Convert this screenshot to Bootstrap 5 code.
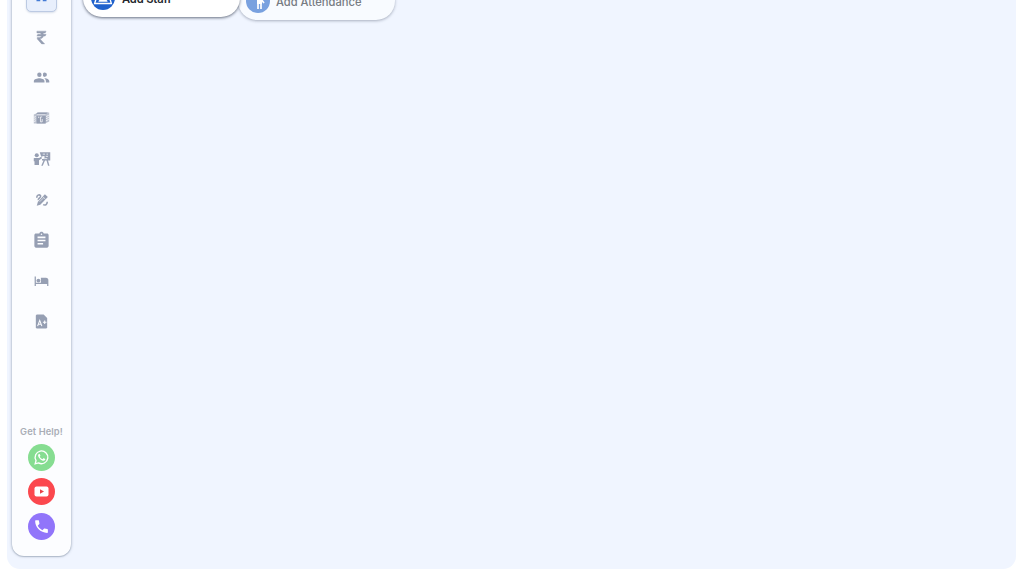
<!DOCTYPE html>
<html lang="en">
<head>
<meta charset="utf-8">
<meta name="viewport" content="width=device-width, initial-scale=1">
<title>Dashboard</title>
<link href="https://cdn.jsdelivr.net/npm/bootstrap@5.3.0/dist/css/bootstrap.min.css" rel="stylesheet">
<style>
body{background:#fff;font-family:"Inter","Liberation Sans",sans-serif;height:576px}
.shell{height:609px;margin:-40px 8px 0 7px;background:#f0f5ff;border-radius:0 0 13px 13px;padding-left:5px}
.side{width:59px;height:596px;background:#fcfdff;border-radius:0 0 12px 12px;box-shadow:0 0 3px rgba(70,90,115,.55),0 1px 1px rgba(70,90,115,.2)}
.slot{height:40.7px;color:#969fb3}
.slot svg{display:block}
.home{width:31px;height:29px;background:#e8effc;border:1px solid #bccae3;border-radius:5px;color:#437bd5;box-shadow:0 1px 2px rgba(60,90,140,.18);padding-bottom:4px}
.menu{padding-top:16px}
.menu .slot:first-child{padding-top:2px}
.help-label{font-size:9.3px;line-height:12px;font-weight:600;color:#a9adb6;letter-spacing:.12px}
.round{width:27px;height:27px;color:#fff}
.wa{background:#86dd91}.yt{background:#fb484e}.ph{background:#9175fa}
.pill{height:38px;border-radius:19px;background:#fff;font-size:11.2px;font-weight:600;color:#24272d;padding-left:8px;line-height:16px}
.pill-text{margin-left:7px;padding-top:2px;letter-spacing:-.15px}
.staff{width:157px;margin:19px 0 0 12px;box-shadow:0 1px 3px rgba(30,40,60,.65);z-index:1}
.attend{width:157px;margin:22px 0 0 -2px;background:#f8fbff;color:#777b83;font-weight:500;box-shadow:0 1px 3px rgba(50,60,85,.38)}
.disc{width:24px;height:24px;color:#fff;background:#1f61cc}
.attend .disc{background:#79a1df}
.attend .pill-text{letter-spacing:-.03px;margin-left:6px}
</style>
</head>
<body class="overflow-hidden">
<main class="shell d-flex align-items-start">
  <nav class="side d-flex flex-column align-items-center flex-shrink-0">
    <div class="menu d-flex flex-column align-items-center">
      <div class="slot d-flex align-items-center"><a class="home d-flex align-items-center justify-content-center" href="#" aria-label="Home"><svg width="15" height="15" viewBox="0 0 24 24" fill="currentColor"><path d="M12 2 1 12h3v9h6v-6h4v6h6v-9h3z"/></svg></a></div>
      <div class="slot d-flex align-items-center"><svg width="17" height="17" viewBox="0 0 24 24" fill="currentColor" stroke="currentColor" stroke-width=".6"><path d="M5.500 3h13l-1.300 2.500h-3.100c.5.6.8 1.200.9 2h3.500l-1.300 2.500h-2.300c-.7 2.300-2.600 3.600-5.200 3.800l6.800 7.200h-4.300L6 14.100V12h3.300c1.300 0 2.300-.7 2.700-2H5.500l1.300-2.500h5C11.300 6.200 10.500 5.500 9 5.500H5.500z"/></svg></div>
      <div class="slot d-flex align-items-center"><svg width="17" height="17" viewBox="0 0 24 24" fill="currentColor"><path d="M16.700 11.100a3 3 0 1 0-2.700-4.400 5 5 0 0 1 0 3.300 3 3 0 0 0 2.700 1.100zM9 11.200a3.100 3.100 0 1 0 0-6.200 3.100 3.100 0 0 0 0 6.200zM9 13c-2.700 0-7.800 1.300-7.800 4v2h15v-2c0-2.700-4.500-4-7.200-4zm8 0h-1.300c1.500 1 2.500 2.300 2.500 4v2H23v-2c0-2.500-3.500-3.700-6-4z"/></svg></div>
      <div class="slot d-flex align-items-center"><svg width="17" height="14" viewBox="0 0 24 20"><path d="M1 5 8 2h15v13l-6 3H1z" fill="currentColor" opacity=".62"/><path d="M5 6h13v12H5zM6 2h15l-3 3H4z" fill="currentColor"/><path d="m18.500 8 4-2m-4 5 4-2m-4 5 4-2M1 9l3-1m-3 4 3-1m-3 4 3-1M5 5.500h13M13 8.500h-2.500v7H13v-4M8 8v2" fill="none" stroke="#fcfdff" stroke-width="1.100"/></svg></div>
      <div class="slot d-flex align-items-center"><svg width="18" height="18" viewBox="0 0 24 24" fill="currentColor"><circle cx="5" cy="7" r="2.700"/><path d="M2 10.500h6l3-1.500 1 2-4 2.500V20H2v-5H1v-4z"/><path fill-rule="evenodd" d="M9 3h14v11h-3l2 7h-2l-2-7h-2l-3 7h-2l3-7h-2v-2h2l2-3-2-1-3 1z"/><path d="M13 5.500h3m2 0h2m-3 3h3m-6 3h5" stroke="#fcfdff" stroke-width="1"/></svg></div>
      <div class="slot d-flex align-items-center"><svg width="14" height="14" viewBox="0 0 24 24" fill="currentColor"><path d="m17 2 5 5L9 20l-6 2 2-7z"/><path d="M3 8c0-4 4-6 6-4 3 3-5 6-3 8M14 20c4 2 7-1 7-5" fill="none" stroke="currentColor" stroke-width="2.700"/><path d="m13 6 5 5M8 15l7-7" stroke="#fcfdff" stroke-width="1"/></svg></div>
      <div class="slot d-flex align-items-center"><svg width="19" height="19" viewBox="0 0 24 24" fill="currentColor"><path d="M19 3h-4.180C14.400 1.840 13.300 1 12 1s-2.400.840-2.820 2H5c-1.100 0-2 .900-2 2v14c0 1.100.900 2 2 2h14c1.100 0 2-.900 2-2V5c0-1.100-.900-2-2-2zm-7 0c.550 0 1 .450 1 1s-.450 1-1 1-1-.450-1-1 .450-1 1-1zm2 14H7v-2h7zm3-4H7v-2h10zm0-4H7V7h10z"/></svg></div>
      <div class="slot d-flex align-items-center"><svg width="15" height="15" viewBox="0 0 24 24" fill="currentColor"><circle cx="7" cy="10.500" r="3"/><path d="M19 6h-8v8H3V4H1v15h2v-3h18v3h2v-9a4 4 0 0 0-4-4z"/></svg></div>
      <div class="slot d-flex align-items-center"><svg width="17" height="17" viewBox="0 0 24 24"><path fill="currentColor" d="M6 2h9l5 5v13a2 2 0 0 1-2 2H6a2 2 0 0 1-2-2V4c0-1.100.900-2 2-2z"/><path d="m6.500 18.500 3-8 3 8m-5-2.500h4M14 13h5m-2.500-2.500v5" fill="none" stroke="#fcfdff" stroke-width="1.500"/></svg></div>
    </div>
    <div class="mt-auto d-flex flex-column align-items-center" style="padding-bottom:16px">
      <div class="help-label text-nowrap">Get Help!</div>
      <a href="#" aria-label="WhatsApp" class="round wa rounded-circle d-flex align-items-center justify-content-center" style="margin-top:6px"><svg width="17" height="17" viewBox="0 0 24 24"><path d="m3 21 1.300-4.600a9 9 0 1 1 3.500 3.300z" fill="none" stroke="currentColor" stroke-width="1.900"/><path d="M8.700 7c-.6 0-1.500.8-1.500 2.100 0 2.800 4.800 7.500 7.600 7.500 1.500 0 2.600-1 2.600-2 0-.5-.3-.6-.6-.7l-1.700-.8c-.4-.2-.7 0-.9.3l-.7.9c-1.900-.7-3.200-2-4-3.500l.8-1c.2-.3.200-.5.100-.8l-.8-1.600C9.400 7.100 9.200 7 8.700 7z" fill="currentColor"/></svg></a>
      <a href="#" aria-label="YouTube" class="round yt rounded-circle d-flex align-items-center justify-content-center" style="margin-top:7.500px"><svg width="15" height="11" viewBox="0 0 15 11"><rect x=".5" y=".5" width="14" height="10" rx="2" fill="currentColor"/><path d="m6 3.300 4 2.200-4 2.200z" fill="#e84147"/></svg></a>
      <a href="#" aria-label="Call" class="round ph rounded-circle d-flex align-items-center justify-content-center" style="margin-top:8px"><svg width="17" height="17" viewBox="0 0 24 24" fill="currentColor"><path d="M6.620 10.790a15.100 15.100 0 0 0 6.590 6.590l2.200-2.200c.270-.270.670-.360 1.020-.240 1.120.370 2.330.570 3.570.570.550 0 1 .450 1 1V20c0 .550-.450 1-1 1C10.610 21 3 13.390 3 4c0-.550.450-1 1-1h3.500c.550 0 1 .450 1 1 0 1.250.200 2.450.570 3.570.110.350.030.740-.250 1.020z"/></svg></a>
    </div>
  </nav>
  <div class="pill staff position-relative d-flex align-items-center flex-shrink-0"><span class="disc rounded-circle d-flex align-items-center justify-content-center flex-shrink-0"><svg width="20" height="20" viewBox="0 0 24 24"><circle cx="12" cy="9" r="3" fill="currentColor"/><path d="M6.500 16.500c0-2 2.800-3.500 5.500-3.500s5.500 1.500 5.500 3.500z" fill="currentColor"/><path d="M4 12 2 18.500h20L20 12" fill="none" stroke="currentColor" stroke-width="1.700"/></svg></span><span class="pill-text">Add Staff</span></div>
  <div class="pill attend d-flex align-items-center flex-shrink-0"><span class="disc rounded-circle d-flex align-items-center justify-content-center flex-shrink-0"><svg width="18" height="20" viewBox="0 0 18 20"><circle cx="10" cy="3" r="2" fill="currentColor"/><path d="M5 2v4l4 2v10M9 8h3v10M12 8l3 4" fill="none" stroke="currentColor" stroke-width="1.700"/><path d="M8 7h5v6H8z" fill="currentColor"/></svg></span><span class="pill-text">Add Attendance</span></div>
</main>
<script src="https://cdn.jsdelivr.net/npm/bootstrap@5.3.0/dist/js/bootstrap.bundle.min.js"></script>
</body>
</html>
